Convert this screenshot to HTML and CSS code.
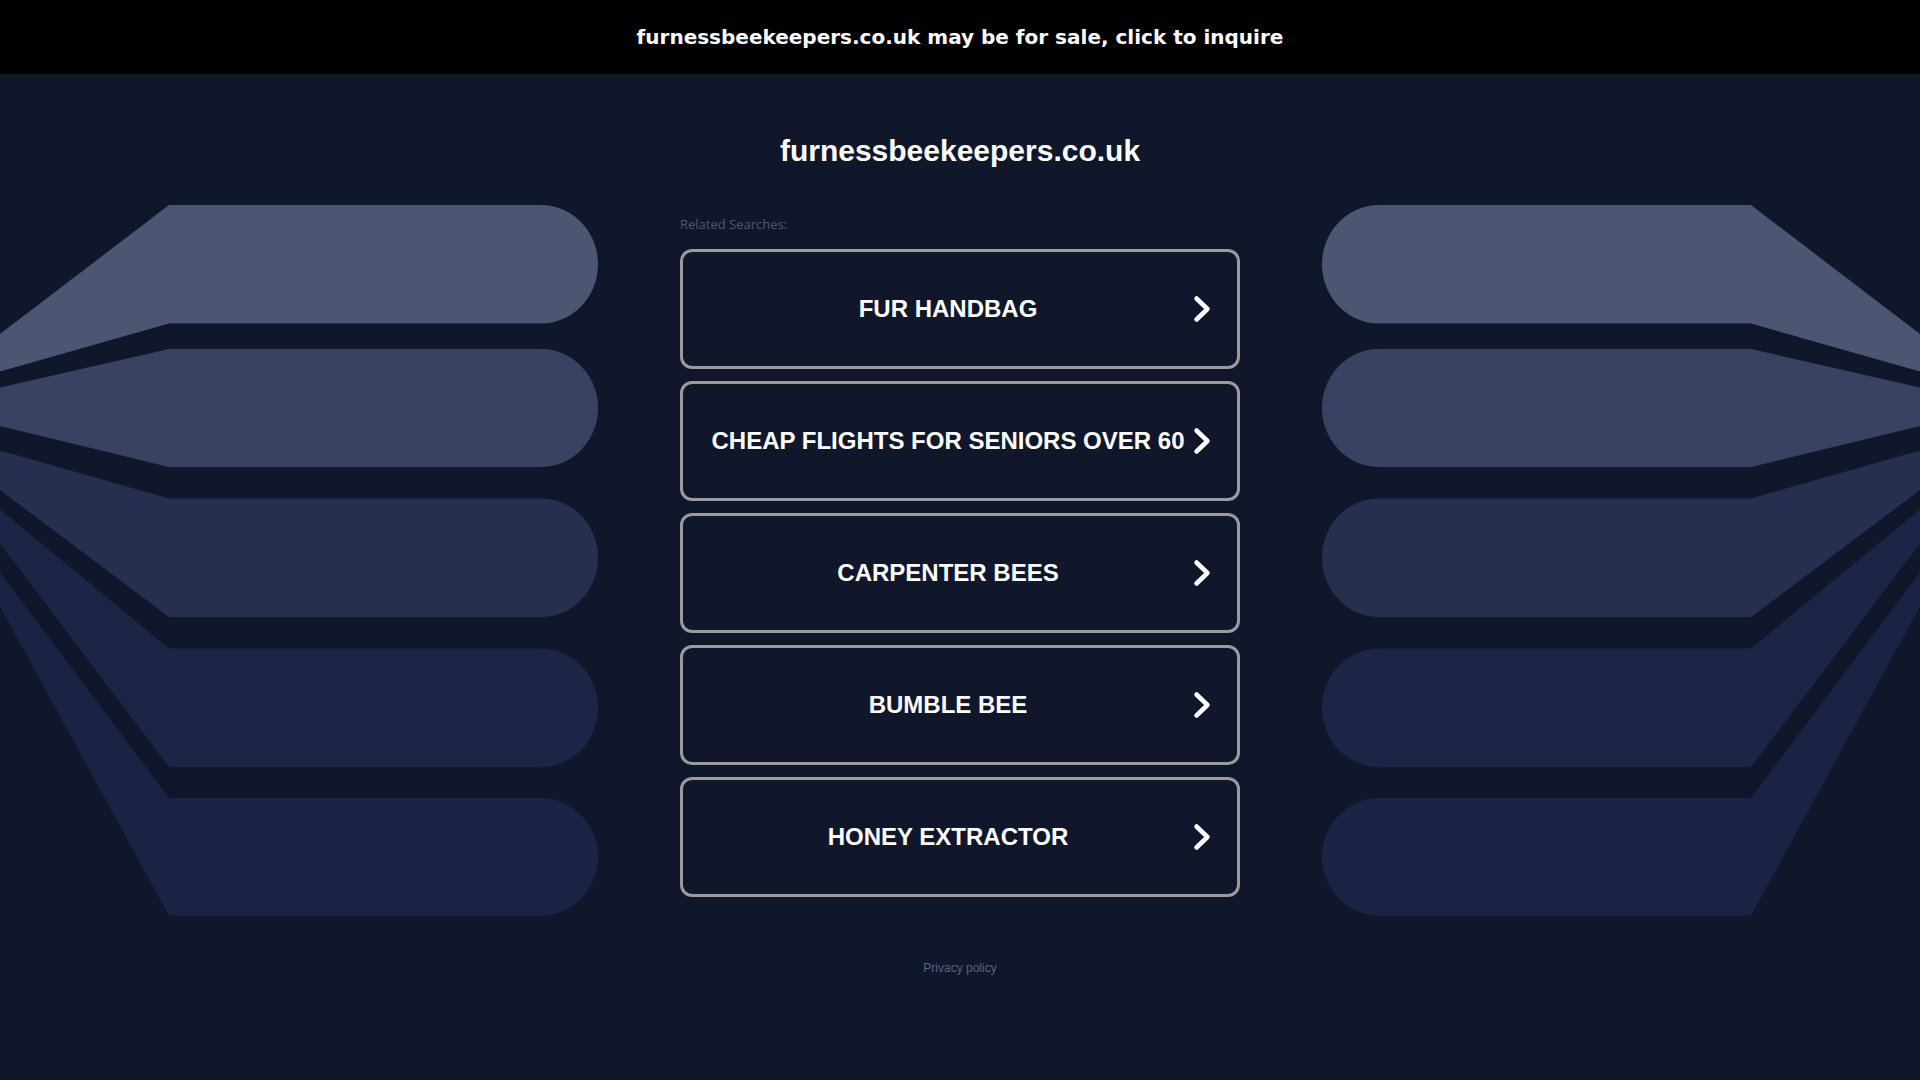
FILE: index.html
```html
<!DOCTYPE html>
<html lang="en">
<head>
<meta charset="utf-8">
<title>furnessbeekeepers.co.uk</title>
<link rel="stylesheet" href="styles.css">
</head>
<body>
<svg class="backdrop" width="1920" height="1080" viewBox="0 0 1920 1080" aria-hidden="true">
  <g id="fan">
    <path fill="#4b5672" d="M0 334 L169 205 L541 205 A57 59.25 0 0 1 541 323.5 L169 323.5 L0 371.5 Z"/>
    <path fill="#394260" d="M0 387.5 L169 349 L541 349 A57 59 0 0 1 541 467 L169 467 L0 426 Z"/>
    <path fill="#262f4e" d="M0 450.5 L169 498.5 L541 498.5 A57 59.25 0 0 1 541 617 L169 617 L0 490 Z"/>
    <path fill="#1c2545" d="M0 509.5 L169 648.5 L541 648.5 A57 59.25 0 0 1 541 767 L169 767 L0 543.5 Z"/>
    <path fill="#1a2343" d="M0 572.5 L169 798 L541 798 A57 58.75 0 0 1 541 915.5 L169 915.5 L0 606.5 Z"/>
  </g>
  <use href="#fan" transform="translate(1920 0) scale(-1 1)"/>
</svg>

<header class="topbar">furnessbeekeepers.co.uk may be for sale, click to inquire</header>

<main class="content">
  <h1 class="domain">furnessbeekeepers.co.uk</h1>
  <div class="related">Related Searches:</div>
  <div class="links">
    <a class="link" href="#"><span class="label">FUR HANDBAG</span><svg class="chev" width="24" height="28" viewBox="0 0 24 28"><path d="M3.5 3.5 L14.5 14 L3.5 24.5"/></svg></a>
    <a class="link" href="#"><span class="label">CHEAP FLIGHTS FOR SENIORS OVER 60</span><svg class="chev" width="24" height="28" viewBox="0 0 24 28"><path d="M3.5 3.5 L14.5 14 L3.5 24.5"/></svg></a>
    <a class="link" href="#"><span class="label">CARPENTER BEES</span><svg class="chev" width="24" height="28" viewBox="0 0 24 28"><path d="M3.5 3.5 L14.5 14 L3.5 24.5"/></svg></a>
    <a class="link" href="#"><span class="label">BUMBLE BEE</span><svg class="chev" width="24" height="28" viewBox="0 0 24 28"><path d="M3.5 3.5 L14.5 14 L3.5 24.5"/></svg></a>
    <a class="link" href="#"><span class="label">HONEY EXTRACTOR</span><svg class="chev" width="24" height="28" viewBox="0 0 24 28"><path d="M3.5 3.5 L14.5 14 L3.5 24.5"/></svg></a>
  </div>
  <a class="privacy" href="#">Privacy policy</a>
</main>
</body>
</html>
```

FILE: styles.css
```css
html, body {
  margin: 0;
  padding: 0;
}

body {
  width: 1920px;
  height: 1080px;
  overflow: hidden;
  background: #10172b;
  position: relative;
  font-family: "Liberation Sans", Arial, sans-serif;
}

.backdrop {
  position: absolute;
  top: 0;
  left: 0;
  z-index: 0;
}

.topbar {
  position: relative;
  z-index: 1;
  height: 74px;
  background: #000;
  color: #fff;
  font-family: "DejaVu Sans", sans-serif;
  font-weight: bold;
  font-size: 20px;
  line-height: 74px;
  text-align: center;
}

.content {
  position: relative;
  z-index: 1;
  width: 560px;
  margin: 0 auto;
  display: flex;
  flex-direction: column;
}

.domain {
  margin: 59px 0 0;
  color: #fff;
  font-family: "Liberation Sans", Arial, sans-serif;
  font-weight: bold;
  font-size: 30px;
  line-height: 36px;
  text-align: center;
}

.related {
  margin-top: 47px;
  color: #4f5771;
  font-family: "Open Sans", Lato, sans-serif;
  font-size: 13px;
  line-height: 16px;
}

.links {
  margin-top: 17px;
  display: flex;
  flex-direction: column;
  gap: 12px;
}

.link {
  box-sizing: border-box;
  height: 120px;
  border: 3px solid #9b9b9b;
  border-radius: 12px;
  padding: 0 20px;
  display: flex;
  align-items: center;
  text-decoration: none;
  color: #fff;
}

.label {
  flex: 1;
  text-align: center;
  font-family: "Liberation Sans", Arial, sans-serif;
  font-weight: bold;
  font-size: 24px;
  line-height: 28px;
  white-space: nowrap;
}

.chev {
  flex: none;
  display: block;
}

.chev path {
  fill: none;
  stroke: #fff;
  stroke-width: 4.5;
  stroke-linecap: round;
  stroke-linejoin: round;
}

.privacy {
  margin-top: 64px;
  align-self: center;
  color: #5b6480;
  font-family: "Liberation Sans", Arial, sans-serif;
  font-size: 12px;
  line-height: 14px;
  text-decoration: none;
}
```
